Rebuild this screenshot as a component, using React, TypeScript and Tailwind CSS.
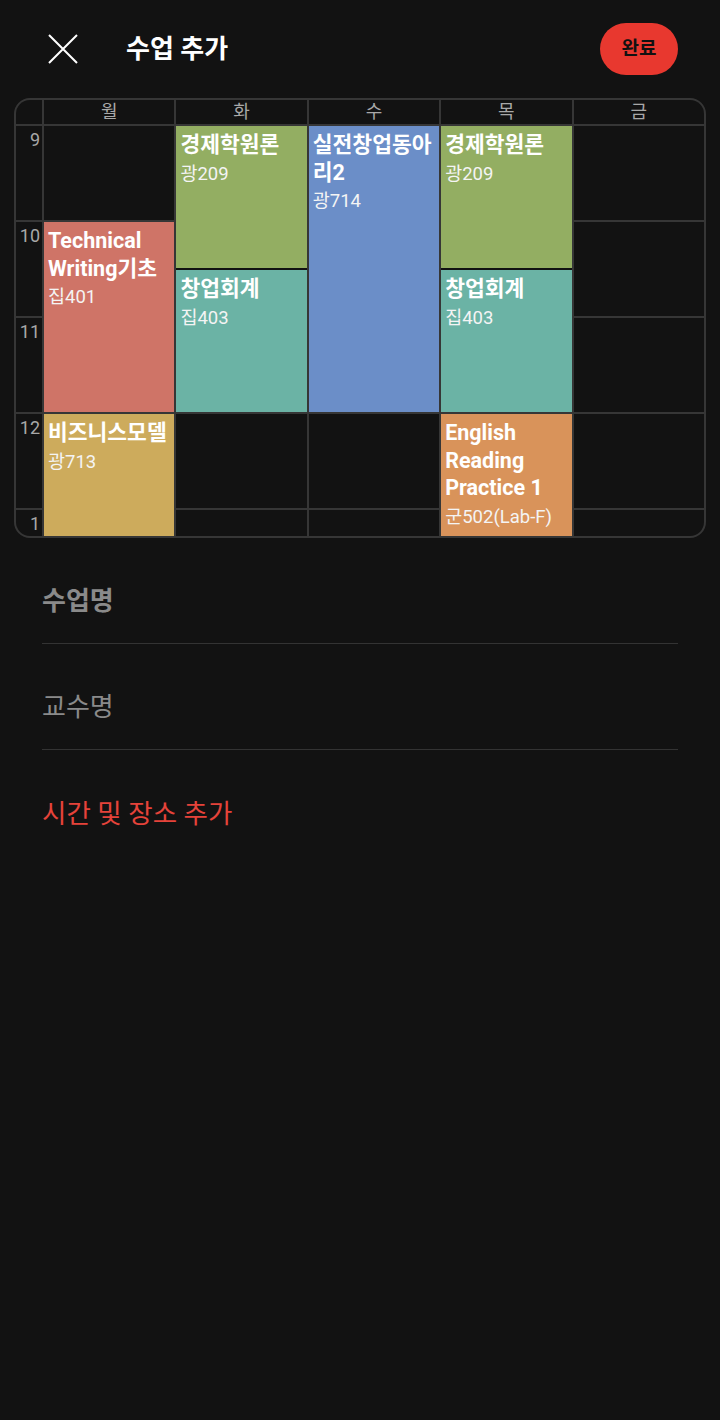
import React from "react";

const FONT = { fontFamily: "Roboto, 'Noto Sans CJK KR', 'Noto Sans', sans-serif" };

const DAYS = ["월", "화", "수", "목", "금"];

interface Course {
  title: string;
  room: string;
  cls: string;
}

const COURSES: Course[] = [
  { title: "Technical Writing기초", room: "집401", cls: "col-start-2 row-start-4 row-end-8 bg-[#cf7467]" },
  { title: "비즈니스모델", room: "광713", cls: "col-start-2 row-start-8 row-end-11 bg-[#cdab5c]" },
  { title: "경제학원론", room: "광209", cls: "col-start-3 row-start-2 row-end-5 bg-[#93ae62]" },
  { title: "창업회계", room: "집403", cls: "col-start-3 row-start-5 row-end-8 bg-[#6bb3a5]" },
  { title: "실전창업동아리2", room: "광714", cls: "col-start-4 row-start-2 row-end-8 bg-[#6b8ec8]" },
  { title: "경제학원론", room: "광209", cls: "col-start-5 row-start-2 row-end-5 bg-[#93ae62]" },
  { title: "창업회계", room: "집403", cls: "col-start-5 row-start-5 row-end-8 bg-[#6bb3a5]" },
  { title: "English Reading Practice 1", room: "군502(Lab-F)", cls: "col-start-5 row-start-8 row-end-11 bg-[#d9935a]" },
];

// hour label, grid row classes
const HOURS: Array<[string, string]> = [
  ["9", "row-start-2 row-end-4"],
  ["10", "row-start-4 row-end-6"],
  ["11", "row-start-6 row-end-8"],
  ["12", "row-start-8 row-end-10"],
  ["1", "row-start-10 row-end-11"],
];

const COLS = ["col-start-2", "col-start-3", "col-start-4", "col-start-5", "col-start-6"];

function CloseIcon() {
  return (
    <svg width="30" height="30" viewBox="0 0 30 30" fill="none">
      <path d="M1 1 L29 29 M29 1 L1 29" stroke="#ffffff" strokeWidth="2" />
    </svg>
  );
}

function Timetable() {
  return (
    <div className="mx-[14px] border-2 border-[#363636] rounded-2xl overflow-hidden bg-[#363636]">
      <div className="grid grid-cols-[26px_repeat(5,1fr)] grid-rows-[24px_repeat(8,46px)_26px] gap-[2px]">
        <div className="col-start-1 row-start-1 bg-[#121212]" />
        {DAYS.map((d, i) => (
          <div
            key={d}
            className={`${COLS[i]} row-start-1 bg-[#121212] flex items-center justify-center text-[18px] text-[#a8a8a8] leading-none`}
          >
            {d}
          </div>
        ))}

        {HOURS.map(([h, rows]) => (
          <React.Fragment key={h}>
            <div className={`col-start-1 ${rows} bg-[#121212] text-right pr-[2px] text-[18px] leading-[27px] text-[#a8a8a8]`}>
              {h}
            </div>
            {COLS.map((c) => (
              <div key={c} className={`${c} ${rows} bg-[#121212]`} />
            ))}
          </React.Fragment>
        ))}

        {COURSES.map((c, i) => (
          <div key={i} className={`${c.cls} overflow-hidden px-[4px] pt-[5px] text-white`}>
            <div className="text-[21.5px] font-bold leading-[27.5px]">{c.title}</div>
            <div className="text-[18.5px] leading-[30px] text-[#f4f4f4]">{c.room}</div>
          </div>
        ))}
      </div>
    </div>
  );
}

export default function App() {
  return (
    <div className="min-h-[1420px] bg-[#121212] pt-[23px]" style={FONT}>
      <div className="flex items-center h-[52px] mb-[23px] pl-[48px] pr-[42px]">
        <CloseIcon />
        <h1 className="ml-[48px] text-[26px] font-bold text-white leading-none">수업 추가</h1>
        <button className="ml-auto w-[78px] h-[52px] rounded-full bg-[#e8382f] text-[19px] font-bold text-[#111]">
          완료
        </button>
      </div>

      <Timetable />

      <div className="px-[42px]">
        <div className="h-[106px] pt-[22px] flex items-center border-b border-[#333333]">
          <span className="text-[26px] font-bold text-[#8a8a8a]">수업명</span>
        </div>
        <div className="h-[106px] pt-[22px] flex items-center border-b border-[#333333]">
          <span className="text-[26px] text-[#8a8a8a]">교수명</span>
        </div>
        <div className="h-[106px] pt-[22px] flex items-center">
          <span className="text-[26.5px] text-[#e5433a]">시간 및 장소 추가</span>
        </div>
      </div>
    </div>
  );
}
